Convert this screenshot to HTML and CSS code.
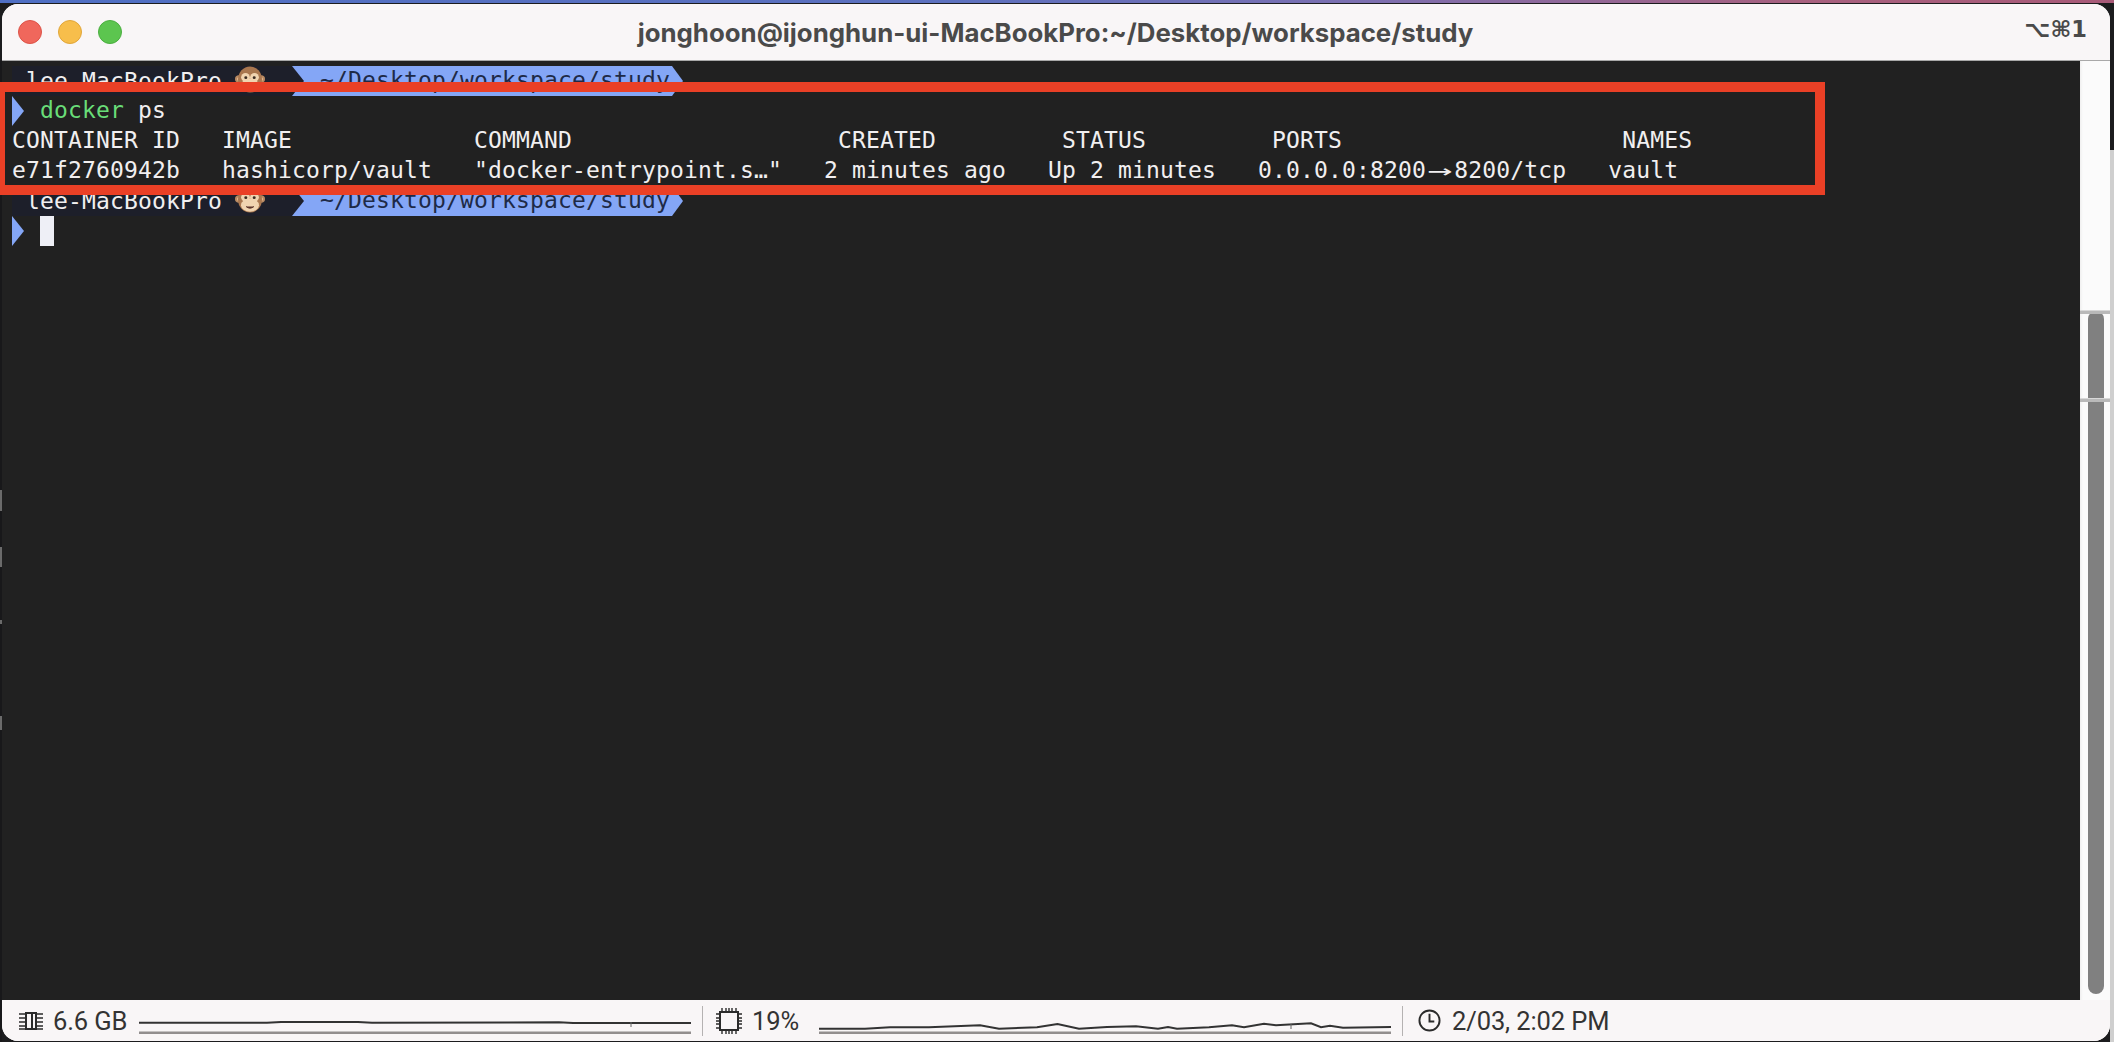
FILE: index.html
```html
<!DOCTYPE html>
<html lang="en">
<head>
<meta charset="utf-8">
<title>jonghoon@ijonghun-ui-MacBookPro</title>
<link rel="stylesheet" href="styles.css">
</head>
<body>
<div class="desktop">
  <div class="wallpaper-strip"></div>
  <div class="side-strip"></div>
  <div class="left-strip">
    <span class="mark mark-a"></span>
    <span class="mark mark-b"></span>
    <span class="mark mark-c"></span>
    <span class="mark mark-d"></span>
  </div>
  <div class="window">
    <header class="titlebar">
      <div class="lights">
        <span class="light red"></span>
        <span class="light yellow"></span>
        <span class="light green"></span>
      </div>
      <div class="title">jonghoon@ijonghun-ui-MacBookPro:~/Desktop/workspace/study</div>
      <div class="keys">⌥⌘1</div>
    </header>
    <main class="main">
      <section class="terminal">
        <div class="row">
          <span class="seg-host"> lee-MacBookPro <svg class="emoji" viewBox="0 0 30 30" preserveAspectRatio="none"><use href="#monkey"/></svg>    </span><span class="seg-path"><svg class="notch" viewBox="0 0 14 30" preserveAspectRatio="none"><polygon points="0,0 12,15 0,30" fill="#1d1f2a"/></svg>  ~/Desktop/workspace/study<svg class="tip" viewBox="0 0 14 30" preserveAspectRatio="none"><polygon points="0,0 2,0 13,15 2,30 0,30" fill="#84a6f6"/></svg></span>
        </div>
        <div class="row"><svg class="caret" viewBox="0 0 14 30" preserveAspectRatio="none"><polygon points="0,0 12,15 0,30" fill="#84a6f6"/></svg><span class="cmd">docker</span> ps</div>
        <div class="row">CONTAINER ID   IMAGE             COMMAND                   CREATED         STATUS         PORTS                    NAMES</div>
        <div class="row">e71f2760942b   hashicorp/vault   "docker-entrypoint.s…"   2 minutes ago   Up 2 minutes   0.0.0.0:8200<span class="arrow">→</span>8200/tcp   vault</div>
        <div class="row">
          <span class="seg-host"> lee-MacBookPro <svg class="emoji" viewBox="0 0 30 30" preserveAspectRatio="none"><use href="#monkey"/></svg>    </span><span class="seg-path"><svg class="notch" viewBox="0 0 14 30" preserveAspectRatio="none"><polygon points="0,0 12,15 0,30" fill="#1d1f2a"/></svg>  ~/Desktop/workspace/study<svg class="tip" viewBox="0 0 14 30" preserveAspectRatio="none"><polygon points="0,0 2,0 13,15 2,30 0,30" fill="#84a6f6"/></svg></span>
        </div>
        <div class="row"><svg class="caret" viewBox="0 0 14 30" preserveAspectRatio="none"><polygon points="0,0 12,15 0,30" fill="#84a6f6"/></svg><span class="cursor"></span></div>
      </section>
      <aside class="scrollbar">
        <div class="track-space"></div>
        <div class="thumb"></div>
        <span class="tick tick-a"></span>
        <span class="tick tick-b"></span>
      </aside>
    </main>
    <footer class="status">
      <div class="stat stat-mem">
        <svg class="icon icon-mem" viewBox="0 0 24 18"><path d="M7 1h10v16H7zM13 1v16" fill="none" stroke="#2b2b2b" stroke-width="2"/><path d="M0 2h6M0 6h6M0 10h6M0 14h6M0 17h6M18 2h6M18 6h6M18 10h6M18 14h6M18 17h6" stroke="#2b2b2b" stroke-width="1.4"/></svg>
        <span class="stat-text">6.6 GB</span>
        <svg class="graph" viewBox="0 0 552 18" preserveAspectRatio="none"><polyline points="0,6.7 128,6.7 142,6 219,6 233,6.7 420,6.3 434,7 552,7" fill="none" stroke="#333" stroke-width="2"/><path d="M492 6v5" stroke="#666" stroke-width="1"/><rect y="15.5" width="552" height="2.5" fill="#928e8e"/></svg>
      </div>
      <div class="stat stat-cpu">
        <svg class="icon icon-cpu" viewBox="0 0 26 26"><rect x="4" y="4" width="18" height="18" fill="none" stroke="#2b2b2b" stroke-width="2"/><path d="M6 0v3M10 0v3M13 0v3M16 0v3M20 0v3M6 23v3M10 23v3M13 23v3M16 23v3M20 23v3M0 6h3M0 10h3M0 13h3M0 16h3M0 20h3M23 6h3M23 10h3M23 13h3M23 16h3M23 20h3" stroke="#2b2b2b" stroke-width="1.4"/></svg>
        <span class="stat-text">19%</span>
        <svg class="graph" viewBox="0 0 572 18" preserveAspectRatio="none"><polyline points="0,12.7 46,12.7 71,11.3 110,11.3 161,9.3 180,12.7 218,11.3 238.5,8 260,12.7 288,11 317,10.3 339,12.7 349,11 358,12.7 390,11.3 413,9.3 425,11.3 445,7.7 457,9.3 492,7.3 502,11.3 511,9.7 524,11.7 572,11" fill="none" stroke="#333" stroke-width="2"/><path d="M472 8v5" stroke="#666" stroke-width="1"/><rect y="15.5" width="572" height="2.5" fill="#928e8e"/></svg>
      </div>
      <div class="stat stat-clock">
        <svg class="icon icon-clock" viewBox="0 0 24 24"><circle cx="12" cy="12" r="10.5" fill="none" stroke="#2b2b2b" stroke-width="2"/><path d="M12 5v8h5" fill="none" stroke="#2b2b2b" stroke-width="2"/></svg>
        <span class="stat-text">2/03, 2:02 PM</span>
      </div>
    </footer>
  </div>
  <div class="annotation"></div>
</div>
<svg class="defs" width="0" height="0" aria-hidden="true">
  <defs>
    <g id="monkey">
      <circle cx="4" cy="14" r="4" fill="#b98a62"/>
      <circle cx="26" cy="14" r="4" fill="#b98a62"/>
      <circle cx="4" cy="14" r="2" fill="#e6bd95"/>
      <circle cx="26" cy="14" r="2" fill="#e6bd95"/>
      <ellipse cx="15" cy="14.5" rx="12" ry="14" fill="#a9774f"/>
      <ellipse cx="10.5" cy="12" rx="4.4" ry="4.6" fill="#f0d4b0"/>
      <ellipse cx="19.5" cy="12" rx="4.4" ry="4.6" fill="#f0d4b0"/>
      <ellipse cx="15" cy="20.5" rx="9" ry="7" fill="#f0d4b0"/>
      <circle cx="10.8" cy="12.5" r="1.5" fill="#3a2a20"/>
      <circle cx="19.2" cy="12.5" r="1.5" fill="#3a2a20"/>
      <path d="M11 22q4 3.5 8 0" fill="#5a3328" stroke="#5a3328" stroke-width="1"/>
    </g>
  </defs>
</svg>
</body>
</html>
```
FILE: styles.css
```css
html, body {
  margin: 0;
  padding: 0;
  height: 100%;
  overflow: hidden;
  background: #1c1c1e;
}

.desktop {
  position: relative;
  width: 2114px;
  height: 1042px;
  padding: 4px 4px 1px 2px;
  box-sizing: border-box;
  overflow: hidden;
}

.wallpaper-strip {
  position: absolute;
  left: 0;
  top: 0;
  width: 100%;
  height: 3px;
  background: linear-gradient(90deg, #4f6fc4 0%, #5d71bf 45%, #7d6fb0 65%, #a8617f 85%, #a85a78 100%);
}

.side-strip {
  position: absolute;
  right: 0;
  top: 150px;
  bottom: 0;
  width: 4px;
  background: #cfcfcf;
}

.left-strip {
  position: absolute;
  left: 0;
  top: 61px;
  bottom: 0;
  width: 2px;
  background: #18181a;
}

.mark {
  position: absolute;
  left: 0;
  width: 2px;
  background: #6b6b6b;
}
.mark-a { top: 429px; height: 21px; }
.mark-b { top: 486px; height: 20px; }
.mark-c { top: 559px; height: 4px; }
.mark-d { top: 655px; height: 14px; }

.window {
  position: relative;
  display: flex;
  flex-direction: column;
  height: 100%;
  border-radius: 16px;
  overflow: hidden;
  background: #f9f6f7;
}

.titlebar {
  display: grid;
  grid-template-columns: 1fr auto 1fr;
  align-items: center;
  height: 56px;
  flex: none;
  border-bottom: 1px solid #a9a9a9;
  padding: 0 23px 0 16px;
  background: #f9f6f7;
}

.lights {
  display: flex;
  gap: 16px;
}

.light {
  width: 24px;
  height: 24px;
  border-radius: 50%;
  box-sizing: border-box;
}
.red { background: #f0675c; border: 1px solid #dc5348; }
.yellow { background: #f7be4b; border: 1px solid #e0a63a; }
.green { background: #5cc54f; border: 1px solid #4bae40; }

.title {
  font-family: Inter, "Liberation Sans", sans-serif;
  font-weight: 700;
  font-size: 25.8px;
  margin-left: 6px;
  color: #4a4a4a;
  white-space: nowrap;
}

.keys {
  justify-self: end;
  font-family: "DejaVu Sans", sans-serif;
  font-weight: 700;
  font-size: 22.5px;
  color: #4a4a4a;
  margin-top: -7px;
}

.main {
  flex: 1;
  display: flex;
  min-height: 0;
}

.terminal {
  flex: 1;
  background: #212121;
  padding: 5px 0 0 10px;
  font-family: "DejaVu Sans Mono", monospace;
  font-size: 23px;
  letter-spacing: 0.154px;
  color: #f1eff0;
  min-width: 0;
}

.row {
  display: flex;
  align-items: flex-start;
  height: 30px;
  line-height: 28px;
  white-space: pre;
}

.seg-host {
  display: block;
  height: 30px;
  width: 280px;
  background: #1d1f2a;
}

.seg-path {
  position: relative;
  display: block;
  height: 30px;
  width: 378px;
  background: #84a6f6;
  color: #1e2a47;
}

.notch {
  position: absolute;
  left: 0;
  top: 0;
  width: 14px;
  height: 30px;
}

.tip {
  position: absolute;
  right: -14px;
  top: 0;
  width: 14px;
  height: 30px;
}

.emoji {
  width: 30px;
  height: 28px;
  vertical-align: -5px;
  margin-left: -1px;
  margin-right: -15px;
}

.caret {
  flex: none;
  width: 14px;
  height: 30px;
}

.cmd {
  color: #69dd78;
  margin-left: 14px;
}

.arrow {
  display: inline-block;
  width: 14px;
  margin: 0 7px;
  transform: scaleX(1.8);
}

.cursor {
  display: block;
  width: 14px;
  height: 30px;
  margin-left: 14px;
  background: #eeeff6;
}

.scrollbar {
  position: relative;
  width: 30px;
  flex: none;
  display: flex;
  flex-direction: column;
  align-items: center;
  background: linear-gradient(90deg, #efefef 0, #fbfbfb 3px);
}

.track-space {
  height: 250px;
  flex: none;
}

.thumb {
  width: 16px;
  flex: 1;
  margin: 0 0 6px 2px;
  border-radius: 8px;
  background: #808080;
}

.tick {
  position: absolute;
  left: 0;
  right: 0;
  height: 3px;
  background: #b9b9b9;
  border-top: 1px solid #d8d8d8;
}
.tick-a { top: 249px; }
.tick-b { top: 337px; }

.status {
  flex: none;
  height: 41px;
  display: flex;
  align-items: stretch;
  background: #f9f6f7;
  font-family: Roboto, Inter, sans-serif;
  font-size: 25.5px;
  color: #333;
}

.stat {
  position: relative;
  display: flex;
  align-items: center;
  box-sizing: border-box;
}

.stat-mem {
  width: 701px;
  padding-left: 17px;
}

.stat-cpu {
  width: 700px;
  padding-left: 13px;
}

.stat-clock {
  flex: 1;
  padding-left: 15px;
}

.stat-mem::after,
.stat-cpu::after {
  content: "";
  position: absolute;
  right: 0;
  top: 6px;
  height: 30px;
  width: 1px;
  background: #b5b2b2;
}

.icon {
  flex: none;
}
.icon-mem { width: 24px; height: 18px; margin-right: 10px; }
.icon-cpu { width: 26px; height: 26px; margin-right: 10px; }
.icon-clock { width: 23px; height: 23px; margin-right: 11px; }

.stat-text {
  white-space: nowrap;
  letter-spacing: -0.1px;
}

.stat-mem .graph {
  width: 552px;
  margin-left: 12px;
}

.stat-cpu .graph {
  width: 572px;
  margin-left: 20px;
}

.graph {
  flex: none;
  height: 18px;
  margin-top: 9px;
}

.annotation {
  position: absolute;
  left: -5px;
  top: 82px;
  width: 1830px;
  height: 113px;
  box-sizing: border-box;
  border: 10px solid #ea4026;
}

.defs {
  position: absolute;
}
```
